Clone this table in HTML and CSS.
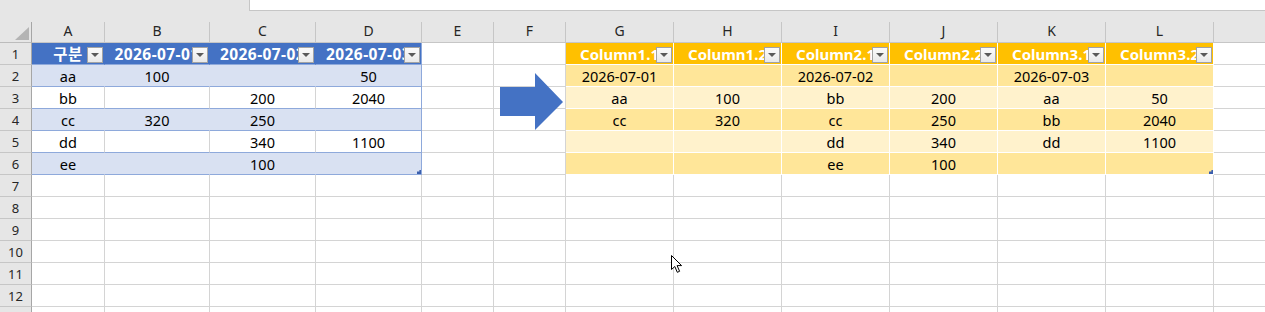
FILE: index.html
```html
<!DOCTYPE html>
<html lang="ko">
<head>
<meta charset="utf-8">
<title>Sheet</title>
<link rel="stylesheet" href="styles.css">
</head>
<body>
<div class="strip"><div class="strip-box"></div></div>
<div class="strip2"></div>
<div class="sheet">
  <div class="c corner"></div>
  <div class="c ch">A</div><div class="c ch">B</div><div class="c ch">C</div><div class="c ch">D</div><div class="c ch">E</div><div class="c ch">F</div>
  <div class="c ch">G</div><div class="c ch">H</div><div class="c ch">I</div><div class="c ch">J</div><div class="c ch">K</div><div class="c ch">L</div><div class="c ch fill"></div>

  <div class="c rh">1</div>
  <div class="c t1h">구분<span class="dd"></span></div>
  <div class="c t1h">2026-07-01<span class="dd"></span></div>
  <div class="c t1h">2026-07-02<span class="dd"></span></div>
  <div class="c t1h last">2026-07-03<span class="dd"></span></div>
  <div class="c"></div><div class="c"></div>
  <div class="c t2h">Column1.1<span class="dd"></span></div>
  <div class="c t2h">Column1.2<span class="dd"></span></div>
  <div class="c t2h">Column2.1<span class="dd"></span></div>
  <div class="c t2h">Column2.2<span class="dd"></span></div>
  <div class="c t2h">Column3.1<span class="dd"></span></div>
  <div class="c t2h">Column3.2<span class="dd"></span></div>
  <div class="c fill"></div>

  <div class="c rh">2</div>
  <div class="c t1b">aa</div><div class="c t1b">100</div><div class="c t1b"></div><div class="c t1b last">50</div>
  <div class="c"></div><div class="c"></div>
  <div class="c t2a">2026-07-01</div><div class="c t2a"></div><div class="c t2a">2026-07-02</div><div class="c t2a"></div><div class="c t2a">2026-07-03</div><div class="c t2a"></div>
  <div class="c fill"></div>

  <div class="c rh">3</div>
  <div class="c t1w">bb</div><div class="c t1w"></div><div class="c t1w">200</div><div class="c t1w last">2040</div>
  <div class="c"></div><div class="c"></div>
  <div class="c t2b">aa</div><div class="c t2b">100</div><div class="c t2b">bb</div><div class="c t2b">200</div><div class="c t2b">aa</div><div class="c t2b">50</div>
  <div class="c fill"></div>

  <div class="c rh">4</div>
  <div class="c t1b">cc</div><div class="c t1b">320</div><div class="c t1b">250</div><div class="c t1b last"></div>
  <div class="c"></div><div class="c"></div>
  <div class="c t2a">cc</div><div class="c t2a">320</div><div class="c t2a">cc</div><div class="c t2a">250</div><div class="c t2a">bb</div><div class="c t2a">2040</div>
  <div class="c fill"></div>

  <div class="c rh">5</div>
  <div class="c t1w">dd</div><div class="c t1w"></div><div class="c t1w">340</div><div class="c t1w last">1100</div>
  <div class="c"></div><div class="c"></div>
  <div class="c t2b"></div><div class="c t2b"></div><div class="c t2b">dd</div><div class="c t2b">340</div><div class="c t2b">dd</div><div class="c t2b">1100</div>
  <div class="c fill"></div>

  <div class="c rh">6</div>
  <div class="c t1b">ee</div><div class="c t1b"></div><div class="c t1b">100</div><div class="c t1b last handle"></div>
  <div class="c"></div><div class="c"></div>
  <div class="c t2a"></div><div class="c t2a"></div><div class="c t2a">ee</div><div class="c t2a">100</div><div class="c t2a"></div><div class="c t2a handle"></div>
  <div class="c fill"></div>

  <div class="c rh">7</div><div class="c"></div><div class="c"></div><div class="c"></div><div class="c"></div><div class="c"></div><div class="c"></div><div class="c"></div><div class="c"></div><div class="c"></div><div class="c"></div><div class="c"></div><div class="c"></div><div class="c fill"></div>
  <div class="c rh">8</div><div class="c"></div><div class="c"></div><div class="c"></div><div class="c"></div><div class="c"></div><div class="c"></div><div class="c"></div><div class="c"></div><div class="c"></div><div class="c"></div><div class="c"></div><div class="c"></div><div class="c fill"></div>
  <div class="c rh">9</div><div class="c"></div><div class="c"></div><div class="c"></div><div class="c"></div><div class="c"></div><div class="c"></div><div class="c"></div><div class="c"></div><div class="c"></div><div class="c"></div><div class="c"></div><div class="c"></div><div class="c fill"></div>
  <div class="c rh">10</div><div class="c"></div><div class="c"></div><div class="c"></div><div class="c"></div><div class="c"></div><div class="c"></div><div class="c"></div><div class="c"></div><div class="c"></div><div class="c"></div><div class="c"></div><div class="c"></div><div class="c fill"></div>
  <div class="c rh">11</div><div class="c"></div><div class="c"></div><div class="c"></div><div class="c"></div><div class="c"></div><div class="c"></div><div class="c"></div><div class="c"></div><div class="c"></div><div class="c"></div><div class="c"></div><div class="c"></div><div class="c fill"></div>
  <div class="c rh">12</div><div class="c"></div><div class="c"></div><div class="c"></div><div class="c"></div><div class="c"></div><div class="c"></div><div class="c"></div><div class="c"></div><div class="c"></div><div class="c"></div><div class="c"></div><div class="c"></div><div class="c fill"></div>
  <div class="c rh"></div><div class="c"></div><div class="c"></div><div class="c"></div><div class="c"></div><div class="c"></div><div class="c"></div><div class="c"></div><div class="c"></div><div class="c"></div><div class="c"></div><div class="c"></div><div class="c"></div><div class="c fill"></div>
</div>

<svg class="arrow" width="64" height="58" viewBox="0 0 64 58"><polygon points="0,14 35,14 35,0 63,29 35,57 35,43 0,43" fill="#4472c4"/></svg>
<svg class="cursor" width="14" height="20" viewBox="0 0 14 20"><path d="M1.5 1.5 L1.5 15.5 L4.8 12.5 L7.3 18.3 L9.6 17.3 L7.1 11.6 L11.6 11.6 Z" fill="#fff" stroke="#000" stroke-width="1" stroke-linejoin="miter"/></svg>
</body>
</html>
```

FILE: styles.css
```css
* { box-sizing: border-box; }

body {
  margin: 0;
  width: 1265px;
  height: 312px;
  overflow: hidden;
  background: #fff;
  position: relative;
  font-family: "Noto Sans", "Noto Sans CJK KR", sans-serif;
}

.strip {
  display: flex;
  height: 11px;
  background: #e6e6e6;
}

.strip-box {
  margin-left: 249px;
  flex: 1;
  background: #fff;
  border-left: 1px solid #c6c6c6;
  border-bottom: 1px solid #c6c6c6;
}

.strip2 {
  height: 11px;
  background: #e6e6e6;
}

.sheet {
  display: grid;
  grid-template-columns: 32px 73px 105px 106px 106px 72px 72px repeat(6, 108px) 1fr;
  grid-template-rows: 21px;
  grid-auto-rows: 22px;
}

.c {
  position: relative;
  border-right: 1px solid #d4d4d4;
  border-bottom: 1px solid #d4d4d4;
  text-align: center;
  font-size: 14.5px;
  line-height: 22px;
  white-space: nowrap;
  overflow: hidden;
  color: #000;
}

.fill { border-right: none; }

.corner {
  background: #e6e6e6;
  border-right-color: #a6a6a6;
  border-bottom-color: #bcbcbc;
}

.corner::after {
  content: "";
  position: absolute;
  right: 2px;
  bottom: 2px;
  width: 14px;
  height: 13px;
  background: #b4b4b4;
  clip-path: polygon(100% 0, 100% 100%, 0 100%);
}

.ch {
  background: #e6e6e6;
  border-right-color: #c6c6c6;
  border-bottom-color: #c6c6c6;
  font-size: 14px;
  line-height: 17px;
  color: #262626;
}

.ch.fill { border-right: none; }

.rh {
  background: #e6e6e6;
  border-right-color: #a6a6a6;
  border-bottom-color: #c6c6c6;
  font-size: 13px;
  color: #262626;
}

/* table 1 (blue) */
.t1h {
  background: #4472c4;
  color: #fff;
  font-weight: 700;
  font-size: 15.5px;
  letter-spacing: 0.4px;
  border-right-color: #4472c4;
  border-bottom-color: #8ea9db;
}

.t1b {
  background: #d9e1f2;
  border-right-color: #d9e1f2;
  border-bottom-color: #8ea9db;
}

.t1w {
  background: #fff;
  border-bottom-color: #8ea9db;
}

.t1h.last, .t1b.last, .t1w.last { border-right-color: #8ea9db; }

/* table 2 (orange) */
.t2h {
  background: #ffc000;
  color: #fff;
  font-weight: 700;
  font-size: 15px;
  border-right-color: #fff;
  border-bottom-color: #fff;
}

.t2a {
  background: #ffe699;
  border-right-color: #fff;
  border-bottom-color: #fff;
}

.t2b {
  background: #fff2cc;
  border-right-color: #fff;
  border-bottom-color: #fff;
}

/* dropdown button */
.dd {
  position: absolute;
  right: 1px;
  top: 4px;
  width: 16px;
  height: 16px;
  background: linear-gradient(#fbfbfb, #e9e9e9);
  border: 1px solid #a3a3a3;
}

.dd::after {
  content: "";
  position: absolute;
  left: 3px;
  top: 5px;
  border-left: 4px solid transparent;
  border-right: 4px solid transparent;
  border-top: 4px solid #5a5a5a;
}

/* table resize handle */
.handle::after {
  content: "";
  position: absolute;
  right: 0;
  bottom: 0;
  width: 4px;
  height: 4px;
  background: #3b5fae;
  clip-path: polygon(100% 0, 100% 100%, 0 100%, 0 40%, 60% 40%, 60% 0);
}

/* overlays */
.arrow {
  position: absolute;
  left: 500px;
  top: 73px;
}

.cursor {
  position: absolute;
  left: 670px;
  top: 254px;
}
```
